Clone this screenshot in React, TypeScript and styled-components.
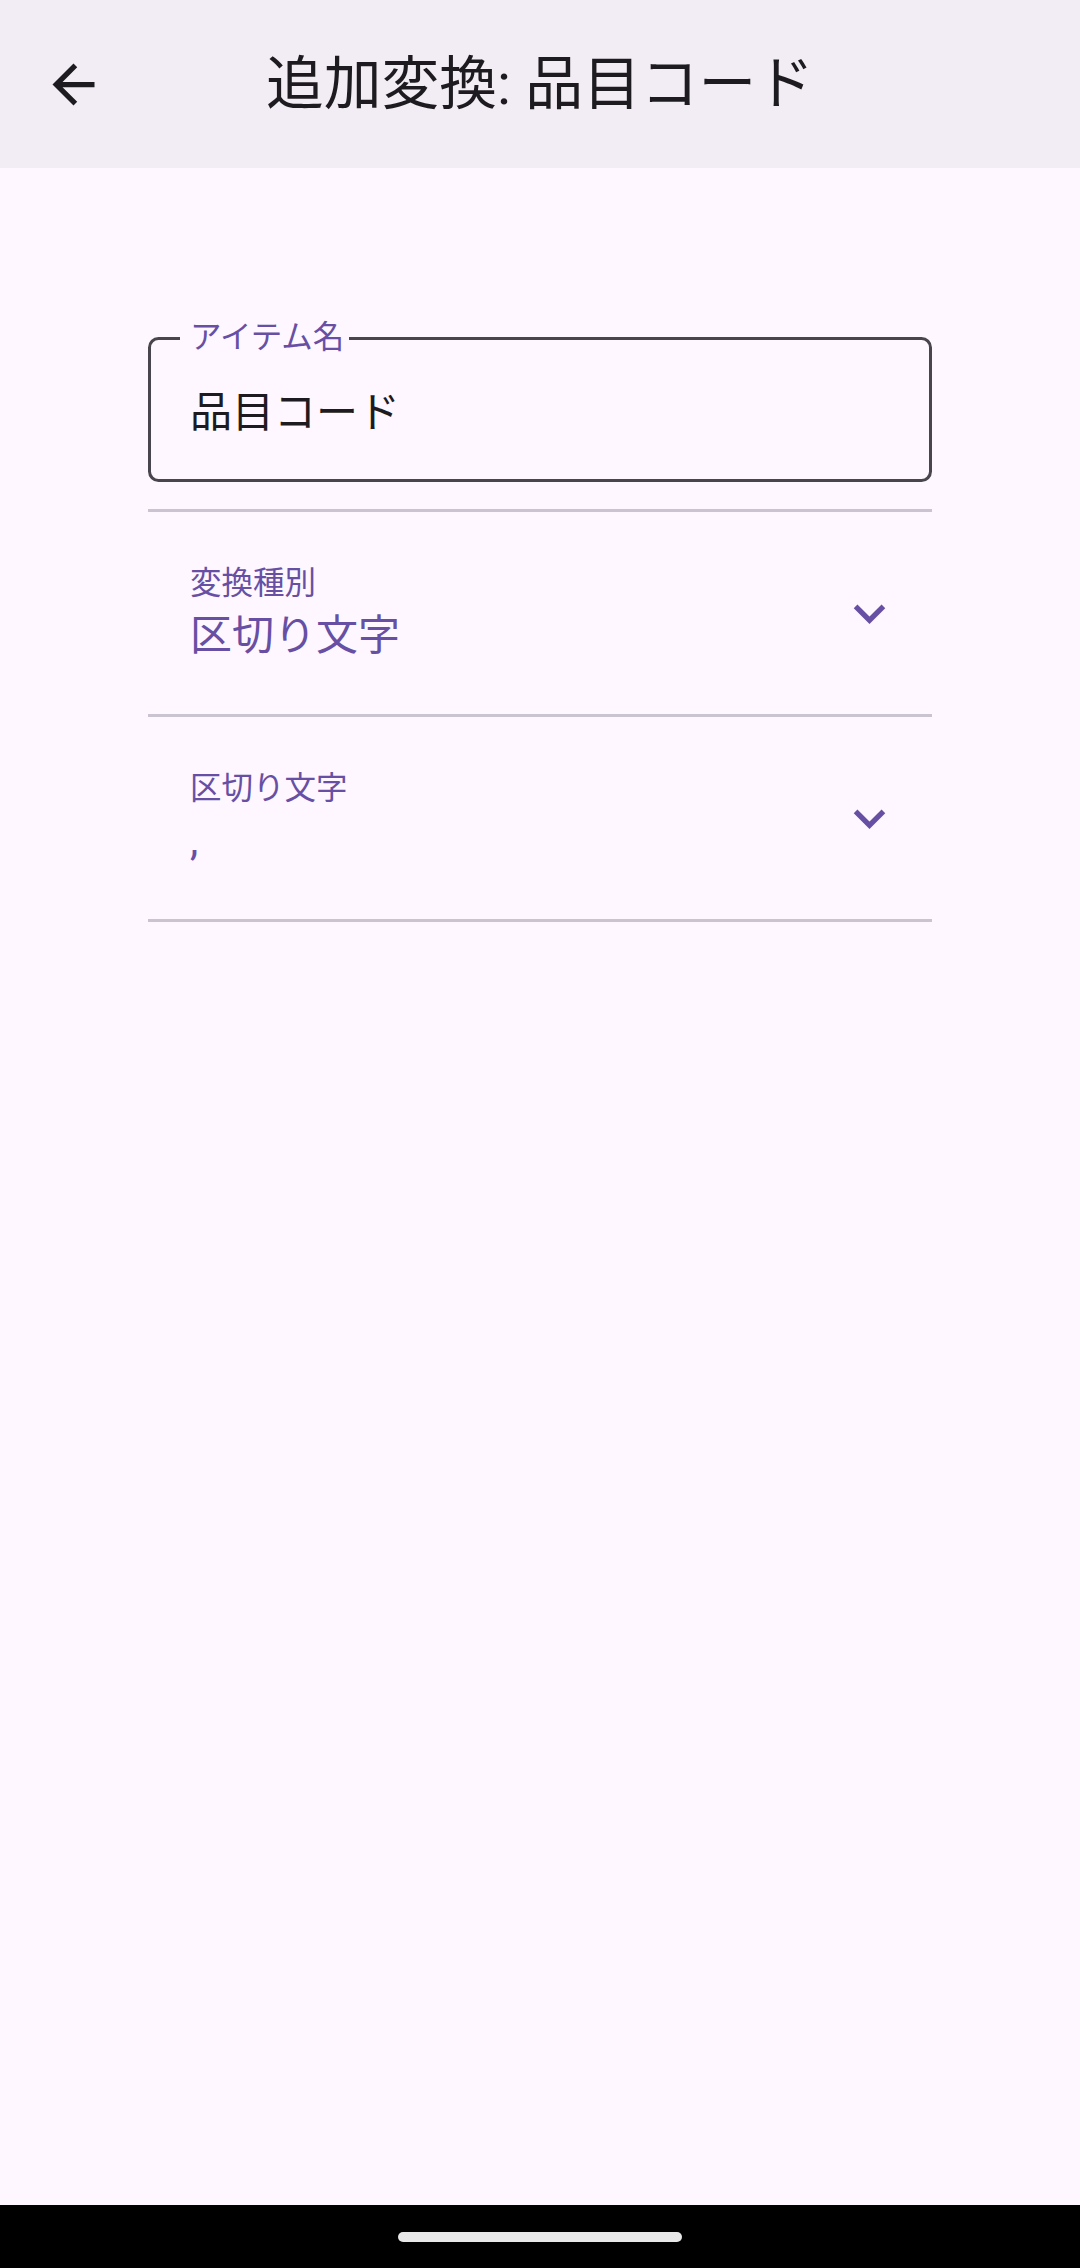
import React from "react";
import styled, { createGlobalStyle } from "styled-components";

const GlobalStyle = createGlobalStyle`
  html, body {
    margin: 0;
    padding: 0;
    background: #fef7ff;
  }
  body {
    font-family: Roboto, "Noto Sans CJK JP", sans-serif;
  }
  * { box-sizing: border-box; }
`;

const Screen = styled.div`
  width: 1080px;
  min-height: 2268px;
  display: flex;
  flex-direction: column;
  background: #fef7ff;
  font-family: Roboto, "Noto Sans CJK JP", sans-serif;
`;

const TopBar = styled.header`
  height: 168px;
  flex: 0 0 168px;
  background: #f2edf4;
  display: grid;
  grid-template-columns: 126px 1fr 126px;
  align-items: center;
  padding: 0 10.5px;
`;

const IconButton = styled.button`
  width: 126px;
  height: 126px;
  border: none;
  background: transparent;
  padding: 0;
  display: flex;
  align-items: center;
  justify-content: center;
  color: #1d1b20;
`;

const Title = styled.h1`
  margin: 0;
  text-align: center;
  font-size: 57.75px;
  font-weight: 400;
  line-height: 74px;
  color: #1d1b20;
  white-space: nowrap;
`;

const Content = styled.main`
  flex: 1;
  width: 784px;
  margin: 0 auto;
  padding-top: 154px;
  display: flex;
  flex-direction: column;
`;

const Outlined = styled.fieldset`
  margin: 0;
  padding: 0;
  border: 3px solid #49454f;
  border-radius: 10.5px;
  min-inline-size: auto;
`;

const FloatLabel = styled.legend`
  margin-left: 29px;
  padding: 0 5px 0 10px;
  font-size: 31.5px;
  line-height: 32px;
  color: #6750a4;
`;

const InputArea = styled.div`
  height: 125px;
  display: flex;
  align-items: center;
  padding: 0 39px 8px;
  font-size: 42px;
  line-height: 50px;
  color: #1d1b20;
`;

const Divider = styled.div<{ $gap?: number }>`
  height: 3px;
  background: #cac4d0;
  margin-top: ${(p) => p.$gap ?? 0}px;
`;

const SelectRow = styled.div`
  height: 202px;
  display: flex;
  align-items: center;
  padding: 0 31px 0 42px;
`;

const SelectTexts = styled.div`
  flex: 1;
  display: flex;
  flex-direction: column;
  color: #6750a4;
`;

const SelectLabel = styled.span`
  font-size: 31.5px;
  line-height: 45px;
`;

const SelectValue = styled.span`
  font-size: 42px;
  line-height: 60px;
`;

const Chevron = styled.svg`
  width: 63px;
  height: 63px;
  fill: #6750a4;
  flex: 0 0 63px;
`;

const NavBar = styled.div`
  height: 63px;
  flex: 0 0 63px;
  background: #000;
  display: flex;
  justify-content: center;
  padding-top: 27px;
`;

const Handle = styled.div`
  width: 284px;
  height: 10px;
  border-radius: 5px;
  background: #e8e8e8;
`;

const ExpandIcon = () => (
  <Chevron viewBox="0 0 24 24">
    <path d="M16.59 8.59L12 13.17 7.41 8.59 6 10l6 6 6-6z" />
  </Chevron>
);

const rows = [
  { label: "変換種別", value: "区切り文字" },
  { label: "区切り文字", value: "," },
];

export default function App() {
  return (
    <>
      <GlobalStyle />
      <Screen>
        <TopBar>
          <IconButton aria-label="戻る">
            <svg width="63" height="63" viewBox="0 0 24 24" fill="currentColor">
              <path d="M20 11H7.83l5.59-5.59L12 4l-8 8 8 8 1.41-1.41L7.83 13H20v-2z" />
            </svg>
          </IconButton>
          <Title>追加変換: 品目コード</Title>
          <div />
        </TopBar>
        <Content>
          <Outlined>
            <FloatLabel>アイテム名</FloatLabel>
            <InputArea>品目コード</InputArea>
          </Outlined>
          <Divider $gap={27} />
          {rows.map((r) => (
            <React.Fragment key={r.label}>
              <SelectRow>
                <SelectTexts>
                  <SelectLabel>{r.label}</SelectLabel>
                  <SelectValue>{r.value}</SelectValue>
                </SelectTexts>
                <ExpandIcon />
              </SelectRow>
              <Divider />
            </React.Fragment>
          ))}
        </Content>
        <NavBar>
          <Handle />
        </NavBar>
      </Screen>
    </>
  );
}
